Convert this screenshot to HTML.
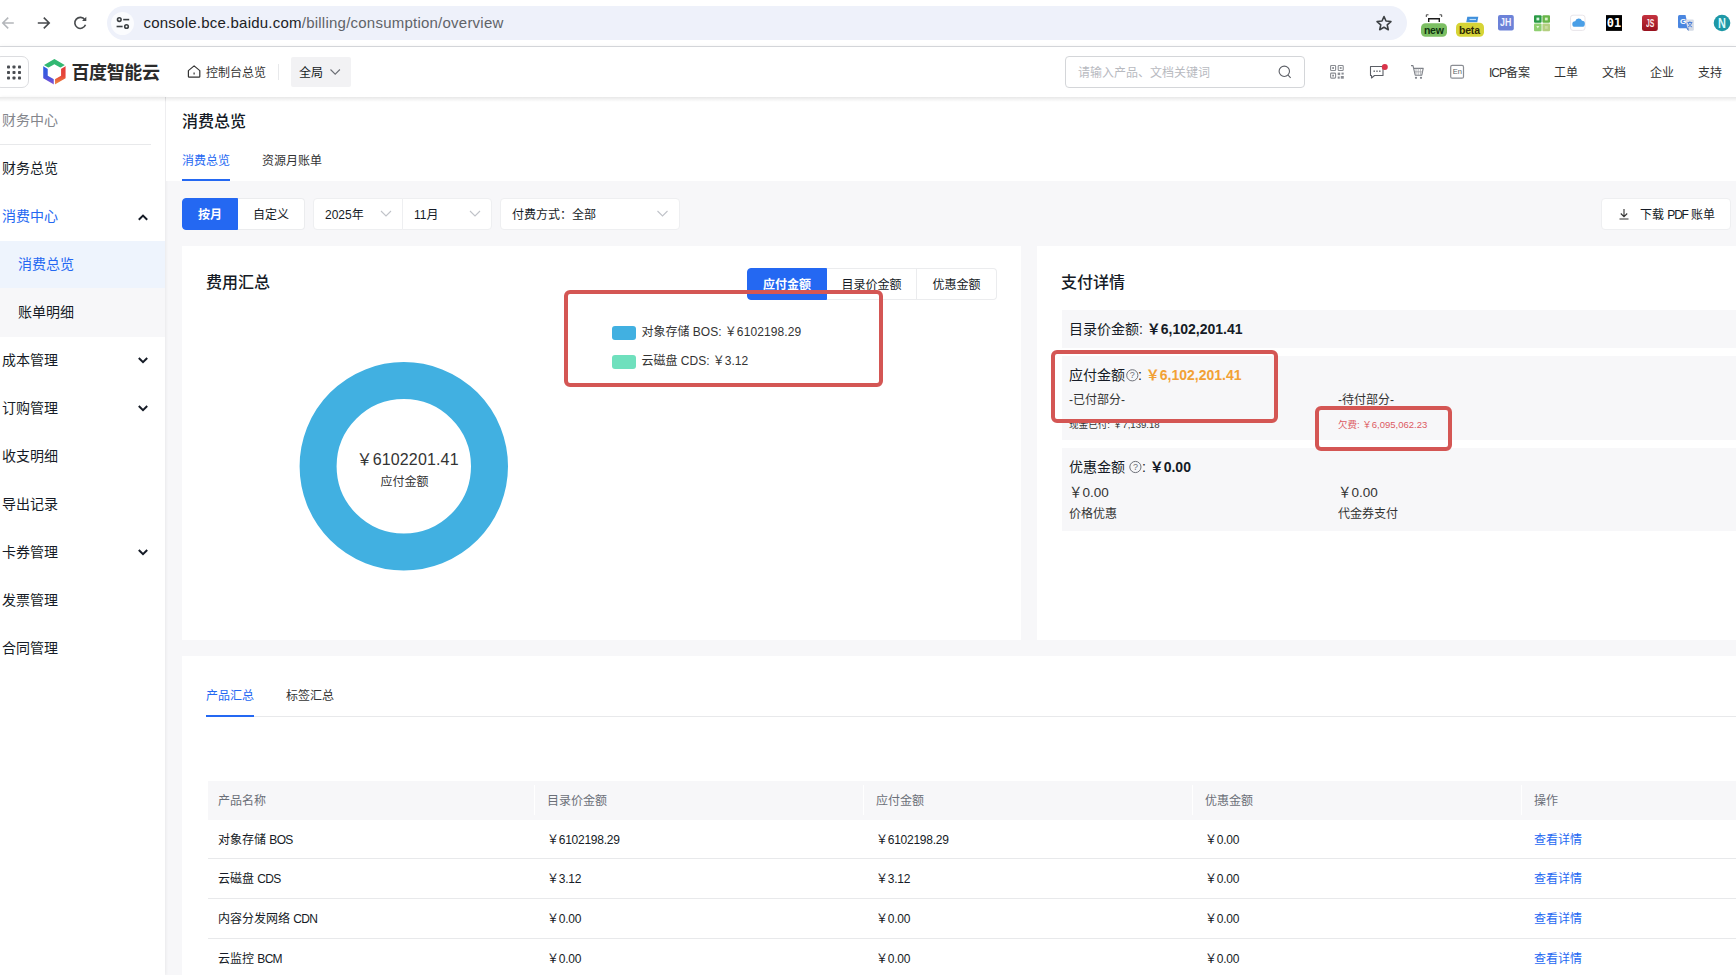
<!DOCTYPE html>
<html lang="zh-CN">
<head>
<meta charset="utf-8">
<title>消费总览</title>
<style>
*{box-sizing:border-box;margin:0;padding:0}
html,body{width:1736px;height:975px;overflow:hidden;background:#f7f7f9}
body{position:relative;font-family:"Liberation Sans","Noto Sans CJK SC",sans-serif;font-size:12px;color:#151b26;line-height:1}
.abs{position:absolute}
.t{position:absolute;white-space:nowrap;line-height:1}
/* browser chrome */
#chrome{left:0;top:0;width:1736px;height:46px;background:#fff}
#chromeline{left:0;top:46px;width:1736px;height:1px;background:#dadce0}
#urlbar{left:107px;top:6.400px;width:1299.500px;height:33.400px;border-radius:17px;background:#eef1fa}
#tune{left:111px;top:11.500px;width:23px;height:23px;border-radius:12px;background:#fbfcfe}
#url{left:143.500px;top:14.700px;font-size:15px;color:#5f6368;letter-spacing:.23px}
#url b{font-weight:400;color:#202124}
/* header */
#hdr{left:0;top:47px;width:1736px;height:50px;background:#fff;box-shadow:0 1px 5px rgba(0,0,0,.12)}
/* sidebar */
#side{left:0;top:97px;width:165px;height:878px;background:#fff;box-shadow:1px 0 3px rgba(0,0,0,.06)}
.sm{left:2px;font-size:14px;color:#151b26}
/* title area */
#titlebar{left:166px;top:97px;width:1570px;height:84px;background:#fff}
.card{position:absolute;background:#fff}
.grow{position:absolute;background:#f7f7f9}
.redbox{position:absolute;border:4px solid #d45654;border-radius:6px}
.btn{position:absolute;height:32px;line-height:32.400px;text-align:center;font-size:12px;border:1px solid #ebecee;background:#fff;color:#151b26}
.sel{position:absolute;height:32px;background:#fff;border:1px solid #eeeff1}
.th{position:absolute;top:795px;font-size:12px;color:#6b6f78;white-space:nowrap}
.td{position:absolute;font-size:12px;color:#151b26;white-space:nowrap}
.lnk{color:#2468f2}
.la{letter-spacing:-.7px}
.dg{letter-spacing:-.25px}
.rowline{position:absolute;left:208px;width:1528px;height:1px;background:#e8e9eb}
.colsep{position:absolute;top:785px;width:1px;height:30px;background:#fff}
</style>
</head>
<body>

<!-- ===== Browser chrome ===== -->
<div id="chrome" class="abs"></div>
<div id="urlbar" class="abs"></div>
<div id="tune" class="abs"></div>
<div id="url" class="t"><b>console.bce.baidu.com</b>/billing/consumption/overview</div>

<!-- chrome nav icons -->
<svg class="abs" style="left:0;top:0" width="1736" height="46" viewBox="0 0 1736 46" fill="none">
  <!-- back (grey, partially cut) -->
  <path d="M13.800 23H3M8.200 17.600L2.800 23l5.400 5.400" stroke="#b4b7bb" stroke-width="1.600"/>
  <!-- forward -->
  <path d="M37.800 23H49M43.800 17.600l5.400 5.400-5.400 5.400" stroke="#474a4d" stroke-width="1.600"/>
  <!-- reload -->
  <path d="M84.800 19.700A5.500 5.500 0 1 0 85.500 24.800" stroke="#474a4d" stroke-width="1.600"/>
  <path d="M86.300 16.800v4.300h-4.300z" fill="#474a4d"/>
  <!-- tune icon -->
  <g stroke="#3c4043" stroke-width="1.6">
    <circle cx="119.300" cy="19.600" r="1.800"/><path d="M123.200 19.600h6"/>
    <circle cx="126.500" cy="26.500" r="1.800"/><path d="M116.600 26.500h6"/>
  </g>
  <!-- star -->
  <path d="M1384.00 16.50L1386.00 21.05L1390.94 21.54L1387.23 24.85L1388.29 29.71L1384.00 27.20L1379.71 29.71L1380.77 24.85L1377.06 21.54L1382.00 21.05Z" stroke="#3c4043" stroke-width="1.600" stroke-linejoin="round"/>
  <!-- ext1: new -->
  <path d="M1426.300 17v-2.200h2.200M1441.700 17v-2.200h-2.200" stroke="#333" stroke-width=".9"/>
  <path d="M1428.700 22v-3.300h10.600v3.300" stroke="#1c1c1c" stroke-width="1.400"/>
  <rect x="1421" y="23.200" width="26" height="13.600" rx="4.500" fill="#7cbf63"/>
  <!-- ext2: beta -->
  <path d="M1467.300 16.800h11l-1 5.400h-11z" fill="#3f8fdc"/>
  <path d="M1469.500 19.500h6.500" stroke="#bfe0fa" stroke-width="1.200"/>
  <rect x="1456" y="22.800" width="28" height="14" rx="4.500" fill="#d6d436"/>
  <!-- JH -->
  <rect x="1498" y="15.100" width="15.800" height="15.300" rx="2" fill="#6c82d8"/>
  <!-- green grid -->
  <rect x="1534" y="15.200" width="7.600" height="7.600" rx="1" fill="#2a9a45"/>
  <rect x="1542.400" y="15.200" width="7.600" height="7.600" rx="1" fill="#68b548"/>
  <rect x="1534" y="23.600" width="7.600" height="7.600" rx="1" fill="#8fcf70"/>
  <rect x="1542.400" y="23.600" width="7.600" height="7.600" rx="1" fill="#b4cf80"/>
  <rect x="1536.500" y="17.600" width="2.800" height="2.800" fill="#d9f5e0"/>
  <rect x="1544.900" y="17.600" width="2.800" height="2.800" fill="#d9f0c8"/>
  <path d="M1536.300 26l1.500 2.400 1.500-2.400z" fill="#e4f6d6"/>
  <rect x="1544.900" y="26" width="2.800" height="2.800" fill="#cbdca2"/>
  <!-- cloud -->
  <rect x="1570.500" y="15.200" width="14.500" height="15.200" rx="2.500" fill="#fff" stroke="#e9e6ea" stroke-width="1"/>
  <path d="M1575 26.800a2.800 2.800 0 0 1 .2-5.600 3.600 3.600 0 0 1 6.800-.4 3 3 0 0 1-.3 6z" fill="#4a9fe6"/>
  <!-- 01 -->
  <rect x="1606" y="15.100" width="16" height="15.800" fill="#000"/>
  <!-- JS -->
  <defs><linearGradient id="jsg" x1="0" y1="0" x2="0" y2="1"><stop offset="0" stop-color="#c4323f"/><stop offset="1" stop-color="#98121f"/></linearGradient></defs>
  <rect x="1642" y="15.100" width="15.800" height="15.800" rx="2.500" fill="url(#jsg)"/>
  <!-- translate -->
  <path d="M1678 16.500a1.500 1.500 0 0 1 1.500-1.500h6l3 13.300h-9a1.500 1.500 0 0 1-1.500-1.500z" fill="#4a86e0"/>
  <path d="M1685.500 19.500h7a1.300 1.300 0 0 1 1.300 1.300v8.700a1.300 1.300 0 0 1-1.300 1.300h-4.500z" fill="#d5dbe6"/>
  <path d="M1687.500 22.500h4.800M1689.900 21.300v1.200M1688.300 22.700c.5 2 1.800 3.400 3.800 4.300M1691.600 22.700c-.5 2-1.800 3.500-3.800 4.400" stroke="#3f78d8" stroke-width=".9" fill="none"/>
  <path d="M1686.300 28.300l2.200 2.600v-2.600z" fill="#3a6fc8"/>
  <!-- N -->
  <circle cx="1722" cy="23" r="8.300" fill="#1e98a6"/>
</svg>
<div class="t" style="left:1424px;top:25.300px;font-size:10.500px;font-weight:700;color:#0f3310;letter-spacing:-0.3px">new</div>
<div class="t" style="left:1459px;top:25.300px;font-size:10.500px;font-weight:700;color:#2e2a05;letter-spacing:-0.2px">beta</div>
<div class="t" style="left:1500.400px;top:17.300px;font-size:11px;font-weight:700;color:#f1f3ff;transform:scaleX(.8);transform-origin:0 0">JH</div>
<div class="t" style="left:1606.700px;top:17px;font-size:12px;font-weight:700;color:#fff;font-family:'DejaVu Sans Mono','Liberation Mono',monospace;letter-spacing:0">01</div>
<div class="t" style="left:1646px;top:17.500px;font-size:11px;font-weight:700;color:#fbe9ea;transform:scaleX(.62);transform-origin:0 0">JS</div>
<div class="t" style="left:1680px;top:17.500px;font-size:8px;font-weight:700;color:#fff">G</div>
<div class="t" style="left:1718px;top:16.300px;font-size:14px;font-weight:700;color:#d9fafa;transform:scaleX(.78);transform-origin:0 0">N</div>
<div id="chromeline" class="abs"></div>

<!-- ===== Console header ===== -->
<div id="hdr" class="abs"></div>
<!-- grid launcher -->
<div class="abs" style="left:-6px;top:56px;width:35px;height:32px;border:1px solid #dcdde0;border-radius:7px;background:#fff"></div>
<div class="abs" style="left:291px;top:57px;width:60px;height:30px;background:#f2f2f4;border-radius:2px"></div>
<div class="abs" style="left:1065px;top:56px;width:240px;height:32px;border:1px solid #d4d6d9;border-radius:4px;background:#fff"></div>
<svg class="abs" style="left:0;top:47px" width="1736" height="50" viewBox="0 47 1736 50" fill="none">
  <g fill="#4a4d52">
    <rect x="7" y="65.500" width="3" height="3" rx=".8"/><rect x="12.500" y="65.500" width="3" height="3" rx=".8"/><rect x="18" y="65.500" width="3" height="3" rx=".8"/>
    <rect x="7" y="71" width="3" height="3" rx=".8"/><rect x="12.500" y="71" width="3" height="3" rx=".8"/><rect x="18" y="71" width="3" height="3" rx=".8"/>
    <rect x="7" y="76.500" width="3" height="3" rx=".8"/><rect x="12.500" y="76.500" width="3" height="3" rx=".8"/><rect x="18" y="76.500" width="3" height="3" rx=".8"/>
  </g>
  <!-- logo hexagon: cx 54.2 cy 71.7 -->
  <g>
    <defs><linearGradient id="lgL" x1="0" y1="0" x2="0" y2="1"><stop offset="0" stop-color="#2a5fe3"/><stop offset=".55" stop-color="#3f57dd"/><stop offset="1" stop-color="#8a50d6"/></linearGradient><linearGradient id="lgR" x1="0" y1="0" x2="0" y2="1"><stop offset="0" stop-color="#e23a3a"/><stop offset=".55" stop-color="#e6483a"/><stop offset="1" stop-color="#f0913f"/></linearGradient></defs>
    <path d="M43.23 65.45L54.40 59.00L65.57 65.45L61.07 68.05L54.40 64.20L47.73 68.05Z" fill="#32b872"/>
    <path d="M43.23 65.45L47.73 68.05L47.73 75.75L54.40 79.60L54.40 84.80L43.23 78.35Z" fill="url(#lgL)"/>
    <path d="M65.57 65.45L61.07 68.05L61.07 75.75L54.40 79.60L54.40 84.80L65.57 78.35Z" fill="url(#lgR)"/>
    <path d="M48.63 68.57L42.33 64.93" stroke="#fff" stroke-width="1.300"/>
    <path d="M60.17 68.57L66.47 64.93" stroke="#fff" stroke-width="1.300"/>
    <path d="M54.40 78.56L54.40 85.84" stroke="#fff" stroke-width="1.300"/>
  </g>
  <!-- home icon -->
  <path d="M188.400 70.600L194.100 65.900L199.800 70.600V76.400a.8.800 0 0 1-.8.800H189.200a.8.800 0 0 1-.8-.8Z" stroke="#333" stroke-width="1.200" stroke-linejoin="round"/>
  <path d="M194.100 72.600v2" stroke="#333" stroke-width="1.200"/>
  <!-- divider -->
  <rect x="278" y="64" width="1" height="16" fill="#e8e9eb"/>
  <!-- chevron in 全局 -->
  <path d="M330.500 69.500l4.700 4.700 4.700-4.700" stroke="#6c6f75" stroke-width="1.100"/>
  <!-- search icon -->
  <circle cx="1284.300" cy="71.300" r="5.200" stroke="#5c5f66" stroke-width="1.100"/>
  <path d="M1288 75.200l2.700 2.700" stroke="#5c5f66" stroke-width="1.100"/>
  <!-- QR icon -->
  <g stroke="#8a8d93" stroke-width="1.100">
    <rect x="1330.600" y="65.500" width="5" height="5" rx=".8"/><rect x="1338.200" y="65.500" width="5" height="5" rx=".8"/>
    <rect x="1330.600" y="73.100" width="5" height="5" rx=".8"/>
  </g>
  <g fill="#8a8d93">
    <rect x="1332.200" y="67.100" width="1.800" height="1.800"/><rect x="1339.800" y="67.100" width="1.800" height="1.800"/><rect x="1332.200" y="74.700" width="1.800" height="1.800"/>
    <rect x="1337.700" y="72.600" width="2.500" height="2.500"/><rect x="1341.500" y="72.600" width="2.200" height="2"/>
    <rect x="1337.700" y="76.500" width="2" height="2.200"/><rect x="1340.800" y="76" width="3" height="2.700"/>
  </g>
  <!-- message -->
  <path d="M1370.500 66.500h12.500v9h-8.500l-3 2.500v-2.500h-1z" stroke="#5c5f66" stroke-width="1.100" stroke-linejoin="round"/>
  <g fill="#5c5f66"><rect x="1373.500" y="70.500" width="1.400" height="1.400"/><rect x="1376.300" y="70.500" width="1.400" height="1.400"/><rect x="1379.100" y="70.500" width="1.400" height="1.400"/></g>
  <circle cx="1384.800" cy="67" r="3" fill="#d9344a"/>
  <!-- cart -->
  <path d="M1411 65.600h2l2.200 9.600h6.600l1.400-6.800h-9.600" stroke="#7d8087" stroke-width="1.100" stroke-linejoin="round"/>
  <path d="M1416 68.600v6.400M1418.200 68.600v6.400M1420.400 68.600v6.400M1414.600 71.800h8" stroke="#a3a6ab" stroke-width=".8"/>
  <circle cx="1416" cy="77.800" r="1.100" fill="#7d8087"/><circle cx="1421" cy="77.800" r="1.100" fill="#7d8087"/>
  <!-- En -->
  <rect x="1450.700" y="65.400" width="12.800" height="12.800" rx="1.500" stroke="#8a8d93" stroke-width="1.200"/>
</svg>
<div class="t" style="left:1452.700px;top:68px;font-size:7.500px;color:#5c5f66">En</div>
<div class="t" style="left:71.500px;top:61.800px;font-size:18px;font-weight:700;color:#2b2b2b;letter-spacing:-0.4px;font-family:'Noto Sans CJK SC',sans-serif">百度智能云</div>
<div class="t" style="left:206px;top:67px;font-size:12px;color:#333">控制台总览</div>
<div class="t" style="left:299px;top:67px;font-size:12px;color:#151b26">全局</div>
<div class="t" style="left:1078px;top:66.500px;font-size:12px;color:#b8babf">请输入产品、文档关键词</div>
<div class="t" style="left:1489px;top:66.900px;font-size:12px;color:#333"><span style="letter-spacing:-1px">ICP</span>备案</div>
<div class="t" style="left:1554px;top:66.900px;font-size:12px;color:#333">工单</div>
<div class="t" style="left:1602px;top:66.900px;font-size:12px;color:#333">文档</div>
<div class="t" style="left:1650px;top:66.900px;font-size:12px;color:#333">企业</div>
<div class="t" style="left:1698px;top:66.900px;font-size:12px;color:#333">支持</div>


<!-- ===== Sidebar ===== -->
<div id="side" class="abs"></div>
<div class="abs" style="left:0;top:241px;width:165px;height:96px;background:#f7f7f9"></div>
<div class="abs" style="left:0;top:241px;width:165px;height:47px;background:#eef4fd"></div>
<div class="abs" style="left:0;top:144px;width:151px;height:1px;background:#e8e9eb"></div>
<div class="t sm" style="top:113.1px;color:#84868c">财务中心</div>
<div class="t sm" style="top:161.1px">财务总览</div>
<div class="t sm" style="top:209.1px;color:#2468f2">消费中心</div>
<div class="t sm" style="top:257.1px;left:18px;color:#2468f2">消费总览</div>
<div class="t sm" style="top:305.1px;left:18px">账单明细</div>
<div class="t sm" style="top:353.1px">成本管理</div>
<div class="t sm" style="top:401.1px">订购管理</div>
<div class="t sm" style="top:449.1px">收支明细</div>
<div class="t sm" style="top:497.1px">导出记录</div>
<div class="t sm" style="top:545.1px">卡券管理</div>
<div class="t sm" style="top:593.1px">发票管理</div>
<div class="t sm" style="top:641.1px">合同管理</div>
<svg class="abs" style="left:130px;top:200px" width="30" height="370" viewBox="130 200 30 370" fill="none" stroke="#151b26" stroke-width="2">
  <path d="M138.800 219.800l4.200-4.200 4.200 4.200"/>
  <path d="M138.800 358l4.200 4.200 4.200-4.200"/>
  <path d="M138.800 406l4.200 4.200 4.200-4.200"/>
  <path d="M138.800 550l4.200 4.200 4.200-4.200"/>
</svg>

<!-- ===== Title / tabs ===== -->
<div id="titlebar" class="abs"></div>
<div class="t" style="left:182px;top:113.600px;font-size:16px;font-weight:500;color:#151b26">消费总览</div>
<div class="t" style="left:182px;top:155.300px;font-size:12px;color:#2468f2">消费总览</div>
<div class="t" style="left:262px;top:155.300px;font-size:12px;color:#333">资源月账单</div>
<div class="abs" style="left:182px;top:179px;width:48px;height:2px;background:#2468f2"></div>

<!-- filter row -->
<div class="btn" style="left:182px;top:198px;width:56px;background:#2468f2;border-color:#2468f2;color:#fff;font-weight:700;border-radius:4px 0 0 4px">按月</div>
<div class="btn" style="left:238px;top:198px;width:67px;border-left:none;border-radius:0 4px 4px 0">自定义</div>
<div class="sel" style="left:313px;top:198px;width:90px;border-radius:4px 0 0 4px"></div>
<div class="sel" style="left:402px;top:198px;width:90px;border-radius:0 4px 4px 0"></div>
<div class="sel" style="left:500px;top:198px;width:180px;border-radius:4px"></div>
<div class="t" style="left:325px;top:209.200px;font-size:12px">2025年</div>
<div class="t" style="left:414px;top:209.200px;font-size:12px">11月</div>
<div class="t" style="left:512px;top:209.200px;font-size:12px">付费方式：全部</div>
<svg class="abs" style="left:370px;top:198px" width="310" height="32" viewBox="370 198 310 32" fill="none" stroke="#c0c3c9" stroke-width="1.100">
  <path d="M381 211l5 5 5-5"/><path d="M470 211l5 5 5-5"/><path d="M657.500 211l5 5 5-5"/>
</svg>
<div class="btn" style="left:1601px;top:198px;width:130px;border-radius:4px;border-color:#eeeff1"></div>
<div class="t" style="left:1640px;top:209.200px;font-size:12px;color:#151b26">下载 <span style="letter-spacing:-1.200px">PDF</span> 账单</div>
<svg class="abs" style="left:1616px;top:206px" width="16" height="16" viewBox="0 0 16 16" fill="none" stroke="#333" stroke-width="1.100">
  <path d="M8 3v7.500M4.800 7.500L8 10.700l3.200-3.200M3.500 13h9"/>
</svg>
<!-- header shadow (on top) -->
<div class="abs" style="left:0;top:97px;width:1736px;height:5px;background:linear-gradient(rgba(0,0,0,.09),rgba(0,0,0,0))"></div>

<!-- ===== Left card: 费用汇总 ===== -->
<div class="card" style="left:182px;top:246px;width:839px;height:394px"></div>
<div class="t" style="left:206px;top:274.800px;font-size:16px;font-weight:500">费用汇总</div>
<div class="btn" style="left:747px;top:268px;width:80px;background:#2468f2;border-color:#2468f2;color:#fff;font-weight:700;border-radius:4px 0 0 4px">应付金额</div>
<div class="btn" style="left:827px;top:268px;width:90px;border-left:none">目录价金额</div>
<div class="btn" style="left:917px;top:268px;width:80px;border-left:none;border-radius:0 4px 4px 0">优惠金额</div>
<svg class="abs" style="left:290px;top:352px" width="228" height="228" viewBox="290 352 228 228">
  <circle cx="403.800" cy="466.300" r="85.700" fill="none" stroke="#41b0e1" stroke-width="37"/>
</svg>
<div class="t" style="left:356.500px;top:451.500px;font-size:16px;color:#333;letter-spacing:.15px">￥6102201.41</div>
<div class="t" style="left:359px;top:476px;font-size:12px;color:#333;width:91px;text-align:center">应付金额</div>
<div class="abs" style="left:612px;top:325.500px;width:24px;height:14px;border-radius:3px;background:#41b0e1"></div>
<div class="abs" style="left:612px;top:354.500px;width:24px;height:14px;border-radius:3px;background:#6fe0bd"></div>
<div class="t" style="left:641.500px;top:325.500px;font-size:12px;color:#333">对象存储 BOS: ￥<span style="letter-spacing:.1px">6102198.29</span></div>
<div class="t" style="left:641.500px;top:354.500px;font-size:12px;color:#333">云磁盘 CDS: ￥3.12</div>

<!-- ===== Right card: 支付详情 ===== -->
<div class="card" style="left:1037px;top:246px;width:699px;height:394px"></div>
<div class="t" style="left:1061px;top:274.800px;font-size:16px;font-weight:500">支付详情</div>
<div class="grow" style="left:1062px;top:309.500px;width:674px;height:38.500px"></div>
<div class="grow" style="left:1062px;top:355.500px;width:674px;height:84.500px"></div>
<div class="grow" style="left:1062px;top:447.500px;width:674px;height:83.500px"></div>
<div class="t" style="left:1069px;top:322px;font-size:14px">目录价金额: <b>￥6,102,201.41</b></div>
<div class="t" style="left:1069px;top:368px;font-size:14px">应付金额<span style="display:inline-block;width:13px"></span>: <b style="color:#f2a135">￥6,102,201.41</b></div>
<div class="t" style="left:1069px;top:394px;font-size:12px;color:#333">-已付部分-</div>
<div class="t" style="left:1338px;top:394px;font-size:12px;color:#333">-待付部分-</div>
<div class="t" style="left:1069px;top:419.700px;font-size:9.600px;color:#333">现金已付: ￥7,139.18</div>
<div class="t" style="left:1338px;top:419.700px;font-size:9.500px;color:#dc5a62">欠费: ￥6,095,062.23</div>
<div class="t" style="left:1069px;top:460px;font-size:14px">优惠金额 <span style="display:inline-block;width:13px"></span>: <b>￥0.00</b></div>
<div class="t" style="left:1069px;top:486.300px;font-size:13.500px;color:#333">￥0.00</div>
<div class="t" style="left:1338px;top:486.300px;font-size:13.500px;color:#333">￥0.00</div>
<div class="t" style="left:1069px;top:508px;font-size:12px;color:#333">价格优惠</div>
<div class="t" style="left:1338px;top:508px;font-size:12px;color:#333">代金券支付</div>
<svg class="abs" style="left:1120px;top:365px" width="30" height="110" viewBox="1120 365 30 110" fill="none" stroke="#6f727a" stroke-width="1">
  <circle cx="1132.300" cy="375.300" r="5.600"/>
  <circle cx="1135.400" cy="467" r="5.600"/>
</svg>
<div class="t" style="left:1129.800px;top:370.800px;font-size:9px;color:#6b6f78">?</div>
<div class="t" style="left:1132.900px;top:462.500px;font-size:9px;color:#6b6f78">?</div>

<!-- ===== Bottom card: product table ===== -->
<div class="card" style="left:182px;top:656px;width:1554px;height:319px"></div>
<div class="t" style="left:206px;top:689.500px;font-size:12px;color:#2468f2">产品汇总</div>
<div class="t" style="left:286px;top:689.500px;font-size:12px;color:#333">标签汇总</div>
<div class="abs" style="left:206px;top:716px;width:1530px;height:1px;background:#e8e9eb"></div>
<div class="abs" style="left:206px;top:714.500px;width:48px;height:2.300px;background:#2468f2"></div>
<div class="abs" style="left:208px;top:781px;width:1528px;height:38.700px;background:#f7f7f9"></div>
<div class="colsep" style="left:534px"></div>
<div class="colsep" style="left:863px"></div>
<div class="colsep" style="left:1192px"></div>
<div class="colsep" style="left:1521px"></div>
<div class="th" style="left:218px">产品名称</div>
<div class="th" style="left:547px">目录价金额</div>
<div class="th" style="left:876px">应付金额</div>
<div class="th" style="left:1205px">优惠金额</div>
<div class="th" style="left:1534px">操作</div>
<div class="td" style="left:218px;top:833.9px">对象存储 <span class="la">BOS</span></div><div class="td dg" style="left:547px;top:833.9px">￥6102198.29</div><div class="td dg" style="left:876px;top:833.9px">￥6102198.29</div><div class="td dg" style="left:1205px;top:833.9px">￥0.00</div><div class="td lnk" style="left:1534px;top:833.9px">查看详情</div>
<div class="td" style="left:218px;top:873.0px">云磁盘 <span class="la">CDS</span></div><div class="td dg" style="left:547px;top:873.0px">￥3.12</div><div class="td dg" style="left:876px;top:873.0px">￥3.12</div><div class="td dg" style="left:1205px;top:873.0px">￥0.00</div><div class="td lnk" style="left:1534px;top:873.0px">查看详情</div>
<div class="td" style="left:218px;top:913.1px">内容分发网络 <span class="la">CDN</span></div><div class="td dg" style="left:547px;top:913.1px">￥0.00</div><div class="td dg" style="left:876px;top:913.1px">￥0.00</div><div class="td dg" style="left:1205px;top:913.1px">￥0.00</div><div class="td lnk" style="left:1534px;top:913.1px">查看详情</div>
<div class="td" style="left:218px;top:953.2px">云监控 <span class="la">BCM</span></div><div class="td dg" style="left:547px;top:953.2px">￥0.00</div><div class="td dg" style="left:876px;top:953.2px">￥0.00</div><div class="td dg" style="left:1205px;top:953.2px">￥0.00</div><div class="td lnk" style="left:1534px;top:953.2px">查看详情</div>
<div class="rowline" style="top:858px"></div>
<div class="rowline" style="top:898px"></div>
<div class="rowline" style="top:938px"></div>

<!-- red annotation boxes -->
<div class="redbox" style="left:564px;top:290px;width:319px;height:97px"></div>
<div class="redbox" style="left:1051px;top:350px;width:227px;height:72.500px"></div>
<div class="redbox" style="left:1315px;top:406px;width:137px;height:45px"></div>

</body>
</html>
